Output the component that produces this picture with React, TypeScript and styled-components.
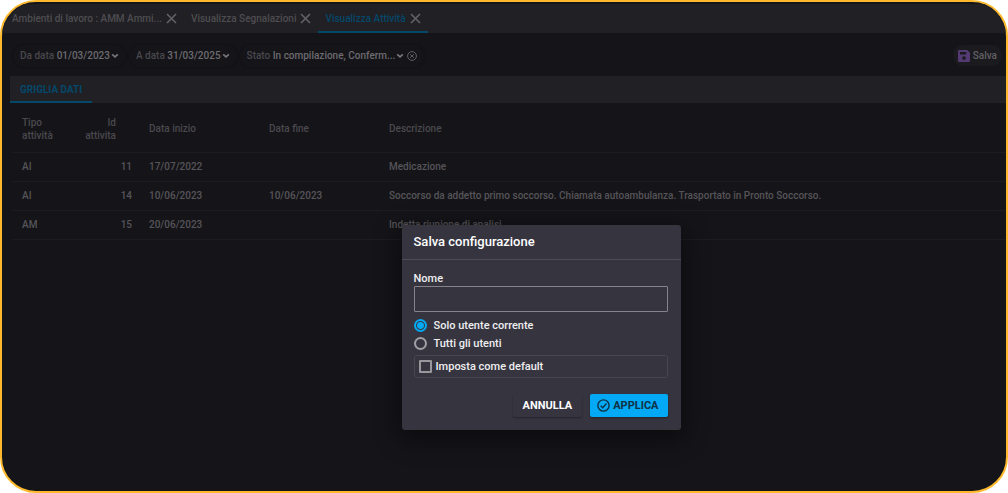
import React, { useState } from "react";
import styled, { createGlobalStyle, css } from "styled-components";

const GlobalStyle = createGlobalStyle`
  *, *::before, *::after { box-sizing: border-box; }
  body { margin: 0; background: #fff; }
  body, button, input { font-family: Roboto, "Liberation Sans", sans-serif; }
`;

const Shell = styled.div`
  position: relative;
  display: flex;
  flex-direction: column;
  min-height: 100vh;
  padding-top: 2px;
  border: 2px solid #fdb92b;
  border-radius: 36px;
  overflow: hidden;
  background: #151419;
  color: #555458;
  font-size: 10px;
  font-weight: 500;
`;

const TabBar = styled.nav`
  display: flex;
  height: 29px;
  padding-left: 3px;
  background: #212024;
`;

const Tab = styled.div<{ $active?: boolean }>`
  display: flex;
  align-items: center;
  gap: 4px;
  padding: 2px 7px 0;
  border-bottom: 2px solid ${(p) => (p.$active ? "#04486a" : "transparent")};
  color: ${(p) => (p.$active ? "#04486a" : "#4e4d51")};
`;

const plainButton = css`
  padding: 0;
  border: 0;
  background: none;
  color: inherit;
  font-size: inherit;
  font-weight: inherit;
  white-space: nowrap;
`;

const TabLabel = styled.button`
  ${plainButton}
`;

const IconButton = styled.button`
  ${plainButton}
  display: flex;
  color: #626165;
`;

const Toolbar = styled.div`
  display: flex;
  align-items: center;
  gap: 3px;
  height: 43px;
  padding: 2px 5px 0 11px;
`;

const Filter = styled.div`
  display: flex;
  align-items: center;
  gap: 3px;
  height: 22px;
  padding: 0 7px;
  border-radius: 11px;
  box-shadow: 0 0 2px #0e0d11;
`;

const FilterButton = styled.button`
  ${plainButton}
  display: flex;
  align-items: center;
  gap: 1px;
  color: #49484c;
`;

const FilterValue = styled.span`
  color: #6c6b6f;
`;

const SaveButton = styled.button`
  ${plainButton}
  display: flex;
  align-items: center;
  gap: 3px;
  height: 21px;
  margin-left: auto;
  padding: 0 4px;
  border-radius: 8px;
  background: #1b1a1f;
  color: #626165;
`;

const SectionBar = styled.div`
  display: flex;
  height: 27px;
  margin-left: 8px;
  background: #212024;
`;

const SectionTab = styled.button`
  ${plainButton}
  padding: 2px 10px 0;
  border-bottom: 2px solid #04486a;
  color: #04486a;
  font-weight: 700;
`;

const TableArea = styled.main`
  padding-left: 11px;
`;

const Table = styled.table`
  width: 100%;
  table-layout: fixed;
  border-collapse: collapse;
`;

const HeadCell = styled.th<{ $width?: number; $numeric?: boolean }>`
  width: ${(p) => (p.$width ? `${p.$width}px` : "auto")};
  height: 49px;
  padding: 3px ${(p) => (p.$numeric ? "24px" : "9px")} 0 9px;
  border-bottom: 1px solid #1d1c21;
  color: #4a494d;
  font-weight: 500;
  line-height: 13px;
  text-align: ${(p) => (p.$numeric ? "right" : "left")};
`;

const Cell = styled.td<{ $numeric?: boolean }>`
  height: 29px;
  padding: 0 ${(p) => (p.$numeric ? "8px" : "9px")} 0 9px;
  border-bottom: 1px solid #1d1c21;
  text-align: ${(p) => (p.$numeric ? "right" : "left")};
  white-space: nowrap;
`;

const Overlay = styled.div`
  position: absolute;
  inset: 0;
  display: flex;
  align-items: center;
  justify-content: center;
  padding: 162px 0 0 74px;
`;

const Dialog = styled.form`
  width: 279px;
  border-radius: 3px;
  background: #36353f;
  color: #eeeef0;
  font-size: 11px;
  box-shadow: 0 6px 24px 4px rgba(0, 0, 0, 0.45);
`;

const DialogTitle = styled.h2`
  margin: 0;
  padding: 0 12px;
  border-bottom: 1px solid #4d4c56;
  color: #fff;
  font-size: 13px;
  font-weight: 500;
  line-height: 34px;
`;

const DialogBody = styled.div`
  display: flex;
  flex-direction: column;
  padding: 12px 13px 0 12px;
`;

const FieldLabel = styled.label`
  line-height: 14px;
`;

const TextInput = styled.input`
  height: 26px;
  margin-bottom: 4px;
  padding: 0 8px;
  border: 1px solid #85848a;
  border-radius: 1px;
  background: transparent;
  color: inherit;
  font-size: 11px;
`;

const Choice = styled.label`
  display: flex;
  align-items: center;
  gap: 7px;
  height: 18px;
`;

const Radio = styled.input`
  appearance: none;
  width: 13px;
  height: 13px;
  margin: 0;
  border: 2px solid #a09fa4;
  border-radius: 50%;

  &:checked {
    border-color: #03a9f4;
    background: radial-gradient(circle, #03a9f4 3px, transparent 4px);
  }
`;

const CheckRow = styled.label`
  display: flex;
  align-items: center;
  gap: 4px;
  height: 23px;
  margin-top: 3px;
  padding: 0 4px;
  border: 1px solid #484751;
  border-radius: 3px;
`;

const Checkbox = styled.input`
  appearance: none;
  width: 13px;
  height: 13px;
  margin: 0;
  border: 2px solid #98979c;
  border-radius: 1px;

  &:checked {
    border-color: #03a9f4;
    background: #03a9f4;
  }
`;

const Actions = styled.div`
  display: flex;
  justify-content: flex-end;
  gap: 8px;
  padding: 16px 13px 13px 12px;
`;

const ActionButton = styled.button<{ $primary?: boolean }>`
  display: flex;
  align-items: center;
  gap: 3px;
  height: 23px;
  padding: 0 ${(p) => (p.$primary ? "9px 0 7px" : "10px")};
  border: 0;
  border-radius: 2px;
  background: ${(p) => (p.$primary ? "#03a9f4" : "#36353f")};
  color: ${(p) => (p.$primary ? "#0f3145" : "#fff")};
  font-size: 11px;
  font-weight: 700;
  box-shadow: 0 1px 2px rgba(0, 0, 0, 0.35);
`;

const CloseIcon = () => (
  <svg width="11" height="11" viewBox="0 0 11 11" stroke="currentColor" strokeWidth="1.6" fill="none" aria-hidden>
    <path d="M1 1l9 9M10 1l-9 9" />
  </svg>
);

const ChevronIcon = () => (
  <svg width="8" height="6" viewBox="0 0 8 6" stroke="#77767a" strokeWidth="1.7" fill="none" aria-hidden>
    <path d="M1.2 1.3L4 3.9l2.8-2.6" />
  </svg>
);

const ClearIcon = () => (
  <svg width="10" height="10" viewBox="0 0 10 10" stroke="currentColor" fill="none" aria-hidden>
    <circle cx="5" cy="5" r="4.4" />
    <path d="M3.2 3.2l3.6 3.6M6.8 3.2L3.2 6.8" />
  </svg>
);

const SaveIcon = () => (
  <svg width="12" height="12" viewBox="0 0 12 12" aria-hidden>
    <path
      fill="#533a72"
      fillRule="evenodd"
      d="M1.3 0H9.3L12 2.7V10.7Q12 12 10.7 12H1.3Q0 12 0 10.7V1.3Q0 0 1.3 0ZM2 2V4.6H8.2V2ZM6 6.3A1.8 1.8 0 1 0 6 9.9A1.8 1.8 0 1 0 6 6.3Z"
    />
  </svg>
);

const CheckCircleIcon = () => (
  <svg width="13" height="13" viewBox="0 0 13 13" stroke="currentColor" strokeWidth="1.4" fill="none" aria-hidden>
    <circle cx="6.5" cy="6.5" r="5.6" />
    <path d="M3.7 6.7l2 2 3.8-4.2" />
  </svg>
);

const tabs = [
  { label: "Ambienti di lavoro : AMM Ammi..." },
  { label: "Visualizza Segnalazioni" },
  { label: "Visualizza Attività", active: true },
];

const filters = [
  { label: "Da data", value: "01/03/2023" },
  { label: "A data", value: "31/03/2025" },
  { label: "Stato", value: "In compilazione, Conferm...", clearable: true },
];

const rows = [
  { type: "AI", id: 11, start: "17/07/2022", end: "", text: "Medicazione" },
  {
    type: "AI",
    id: 14,
    start: "10/06/2023",
    end: "10/06/2023",
    text: "Soccorso da addetto primo soccorso. Chiamata autoambulanza. Trasportato in Pronto Soccorso.",
  },
  { type: "AM", id: 15, start: "20/06/2023", end: "", text: "Indetta riunione di analisi" },
];

export default function App() {
  const [scope, setScope] = useState("current");

  return (
    <>
      <GlobalStyle />
      <Shell>
        <TabBar>
          {tabs.map((t) => (
            <Tab key={t.label} $active={t.active}>
              <TabLabel type="button">{t.label}</TabLabel>
              <IconButton type="button" aria-label={`Chiudi ${t.label}`}>
                <CloseIcon />
              </IconButton>
            </Tab>
          ))}
        </TabBar>
        <Toolbar>
          {filters.map((f) => (
            <Filter key={f.label}>
              <FilterButton type="button" aria-haspopup="true">
                <span>
                  {f.label} <FilterValue>{f.value}</FilterValue>
                </span>
                <ChevronIcon />
              </FilterButton>
              {f.clearable && (
                <IconButton type="button" aria-label="Rimuovi filtro">
                  <ClearIcon />
                </IconButton>
              )}
            </Filter>
          ))}
          <SaveButton type="button">
            <SaveIcon />
            Salva
          </SaveButton>
        </Toolbar>
        <SectionBar>
          <SectionTab type="button">GRIGLIA DATI</SectionTab>
        </SectionBar>
        <TableArea>
          <Table>
            <thead>
              <tr>
                <HeadCell $width={60}>Tipo attività</HeadCell>
                <HeadCell $width={67} $numeric>
                  Id attivita
                </HeadCell>
                <HeadCell $width={120}>Data inizio</HeadCell>
                <HeadCell $width={120}>Data fine</HeadCell>
                <HeadCell>Descrizione</HeadCell>
              </tr>
            </thead>
            <tbody>
              {rows.map((r) => (
                <tr key={r.id}>
                  <Cell>{r.type}</Cell>
                  <Cell $numeric>{r.id}</Cell>
                  <Cell>{r.start}</Cell>
                  <Cell>{r.end}</Cell>
                  <Cell>{r.text}</Cell>
                </tr>
              ))}
            </tbody>
          </Table>
        </TableArea>
        <Overlay>
          <Dialog role="dialog" aria-labelledby="dialog-title" onSubmit={(e) => e.preventDefault()}>
            <DialogTitle id="dialog-title">Salva configurazione</DialogTitle>
            <DialogBody>
              <FieldLabel htmlFor="config-name">Nome</FieldLabel>
              <TextInput id="config-name" type="text" />
              <Choice>
                <Radio
                  type="radio"
                  name="scope"
                  checked={scope === "current"}
                  onChange={() => setScope("current")}
                />
                Solo utente corrente
              </Choice>
              <Choice>
                <Radio type="radio" name="scope" checked={scope === "all"} onChange={() => setScope("all")} />
                Tutti gli utenti
              </Choice>
              <CheckRow>
                <Checkbox type="checkbox" />
                Imposta come default
              </CheckRow>
            </DialogBody>
            <Actions>
              <ActionButton type="button">ANNULLA</ActionButton>
              <ActionButton type="submit" $primary>
                <CheckCircleIcon />
                APPLICA
              </ActionButton>
            </Actions>
          </Dialog>
        </Overlay>
      </Shell>
    </>
  );
}
